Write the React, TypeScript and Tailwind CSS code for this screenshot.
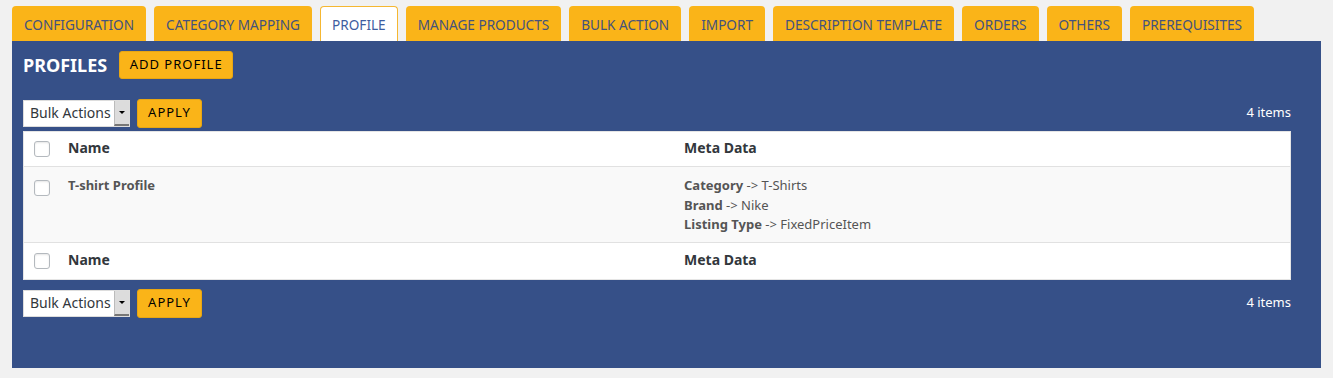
import React from "react";

const tabs = [
  "CONFIGURATION",
  "CATEGORY MAPPING",
  "PROFILE",
  "MANAGE PRODUCTS",
  "BULK ACTION",
  "IMPORT",
  "DESCRIPTION TEMPLATE",
  "ORDERS",
  "OTHERS",
  "PREREQUISITES",
];

const font = { fontFamily: '"Noto Sans", "Open Sans", sans-serif' };

function Checkbox() {
  return (
    <div className="w-4 h-4 rounded-[3px] border border-[#b4b9be] bg-white shadow-[inset_0_1px_2px_rgba(0,0,0,0.1)]" />
  );
}

function BulkBar() {
  return (
    <div className="flex items-center justify-between h-[30px]">
      <div className="flex items-center gap-[7px]">
        <div className="flex items-stretch h-[27px] w-[107px] bg-white border border-[#ddd]">
          <div className="flex-1 flex items-center pl-[6px] text-[14px] leading-none text-[#32373c]">Bulk Actions</div>
          <div className="w-[15px] bg-[#dcdcdc] border-l border-[#bbb] border-b-2 border-b-[#777] flex items-center justify-center">
            <div className="w-0 h-0 border-l-[3px] border-r-[3px] border-t-[3px] border-l-transparent border-r-transparent border-t-black" />
          </div>
        </div>
        <button className="h-[29px] w-[65px] rounded-[3px] bg-[#fab418] border border-[#e8a612] text-[13px] tracking-[1px] text-black">
          APPLY
        </button>
      </div>
      <div className="text-[13px] text-white">4 items</div>
    </div>
  );
}

export default function App() {
  return (
    <div className="min-h-[378px] bg-[#f1f1f1] pt-[6px] px-[12px] pb-[10px]" style={font}>
      <div className="flex gap-[8px] h-[35px]">
        {tabs.map((t) =>
          t === "PROFILE" ? (
            <div
              key={t}
              className="px-[11px] pt-[3px] flex items-center bg-white border border-[#f5b731] border-b-0 rounded-t-[4px] text-[13.6px] text-[#3e5da0]"
            >
              {t}
            </div>
          ) : (
            <div
              key={t}
              className="px-[12px] pt-[3px] flex items-center bg-[#fab418] rounded-t-[4px] text-[13.6px] text-[#44527d]"
            >
              {t}
            </div>
          )
        )}
      </div>
      <div className="bg-[#365088] h-[327px] pl-[11px] pr-[30px] pt-[10px]">
        <div className="flex items-center gap-[12px] h-[28px]">
          <div className="text-[18px] font-bold text-white">PROFILES</div>
          <button className="h-[28px] w-[114px] rounded-[3px] bg-[#fab418] border border-[#e8a612] text-[13px] tracking-[1px] text-black">
            ADD PROFILE
          </button>
        </div>
        <div className="mt-[19px]">
          <BulkBar />
        </div>
        <div className="mt-[3px] bg-white border border-[#e5e5e5] text-[#32373c]">
          <div className="flex h-[35px] items-center border-b border-[#e1e1e1]">
            <div className="w-[34px] pl-[10px]"><Checkbox /></div>
            <div className="w-[616px] pl-[10px] text-[14px] font-bold leading-[20px] -mt-[3px]">Name</div>
            <div className="pl-[10px] text-[14px] font-bold leading-[20px] -mt-[3px]">Meta Data</div>
          </div>
          <div className="flex h-[76px] items-start bg-[#f9f9f9] border-b border-[#e1e1e1] pt-[9px]">
            <div className="w-[34px] pl-[10px] pt-[4px]"><Checkbox /></div>
            <div className="w-[616px] pl-[10px] text-[13px] font-bold text-[#555] leading-[19.5px]">T-shirt Profile</div>
            <div className="pl-[10px] text-[13px] text-[#555] leading-[19.5px]">
              <div><span className="font-bold">Category</span> -&gt; T-Shirts</div>
              <div><span className="font-bold">Brand</span> -&gt; Nike</div>
              <div><span className="font-bold">Listing Type</span> -&gt; FixedPriceItem</div>
            </div>
          </div>
          <div className="flex h-[36px] items-center">
            <div className="w-[34px] pl-[10px]"><Checkbox /></div>
            <div className="w-[616px] pl-[10px] text-[14px] font-bold leading-[20px] -mt-[2px]">Name</div>
            <div className="pl-[10px] text-[14px] font-bold leading-[20px] -mt-[2px]">Meta Data</div>
          </div>
        </div>
        <div className="mt-[8px]">
          <BulkBar />
        </div>
      </div>
    </div>
  );
}
